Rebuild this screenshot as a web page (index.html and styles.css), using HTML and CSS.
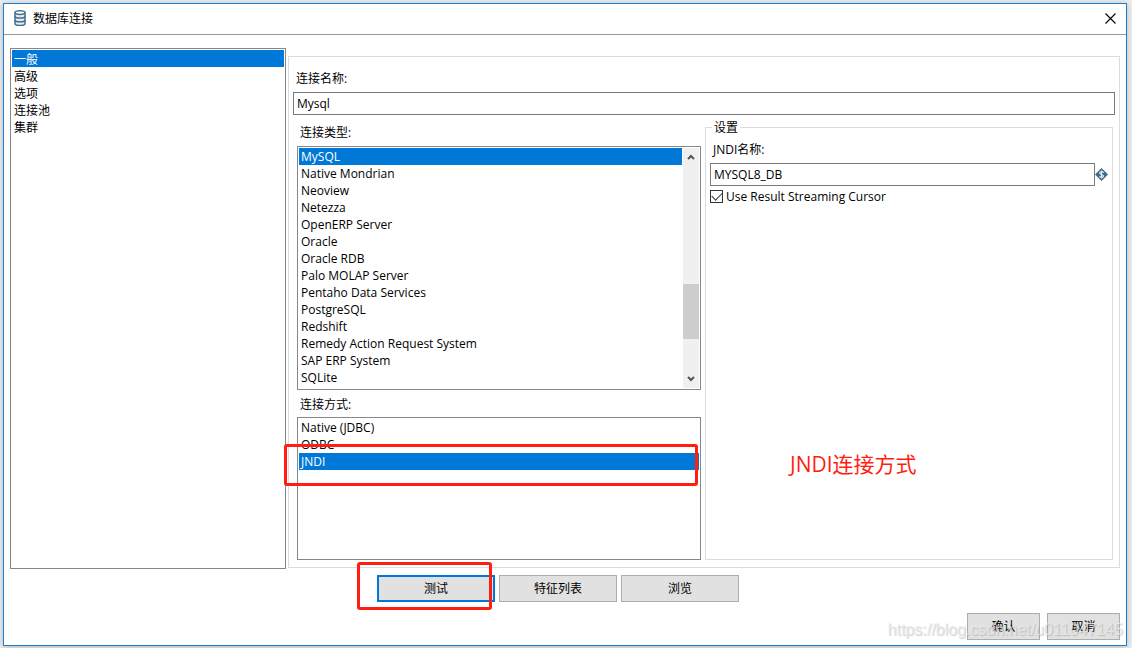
FILE: index.html
```html
<!DOCTYPE html>
<html lang="zh-CN">
<head>
<meta charset="utf-8">
<title>数据库连接</title>
<link rel="stylesheet" href="styles.css">
</head>
<body>
<main class="dialog">
  <header class="titlebar">
    <svg class="db-icon" viewBox="0 0 12 16" width="12" height="16" aria-hidden="true">
      <path d="M1 2.5v11c0 2.6 10 2.6 10 0v-11" fill="#e4ebf0" stroke="#45708c" stroke-width="1.5"/>
      <ellipse cx="6" cy="2.6" rx="5" ry="1.8" fill="#fff" stroke="#45708c" stroke-width="1.5"/>
      <path d="M1 6.2c0 2.4 10 2.4 10 0M1 9.9c0 2.4 10 2.4 10 0" fill="none" stroke="#45708c" stroke-width="1.6"/>
    </svg>
    <h1 class="title">数据库连接</h1>
    <button class="close" type="button" aria-label="关闭">
      <svg viewBox="0 0 11 11" width="11" height="11"><path d="M.5.5l10 10M10.5.5l-10 10" stroke="#000" stroke-width="1.1"/></svg>
    </button>
  </header>

  <div class="content">
    <select class="listbox sections" size="5" aria-label="分类">
      <option selected>一般</option>
      <option>高级</option>
      <option>选项</option>
      <option>连接池</option>
      <option>集群</option>
    </select>

    <section class="panel">
      <label class="label name-label" for="conn-name">连接名称:</label>
      <input class="textbox" id="conn-name" type="text" value="Mysql">
      <div class="columns">
        <div class="choices">
          <label class="label" for="conn-type">连接类型:</label>
          <div class="scroll-list">
            <select class="listbox types" id="conn-type" size="14">
              <option selected>MySQL</option>
              <option>Native Mondrian</option>
              <option>Neoview</option>
              <option>Netezza</option>
              <option>OpenERP Server</option>
              <option>Oracle</option>
              <option>Oracle RDB</option>
              <option>Palo MOLAP Server</option>
              <option>Pentaho Data Services</option>
              <option>PostgreSQL</option>
              <option>Redshift</option>
              <option>Remedy Action Request System</option>
              <option>SAP ERP System</option>
              <option>SQLite</option>
            </select>
            <div class="scrollbar" aria-hidden="true">
              <svg viewBox="0 0 8 6" width="8" height="6"><path d="M1 5l3-3 3 3" fill="none" stroke="#555" stroke-width="2"/></svg>
              <div class="track"><div class="thumb"></div></div>
              <svg viewBox="0 0 8 6" width="8" height="6"><path d="M1 1l3 3 3-3" fill="none" stroke="#555" stroke-width="2"/></svg>
            </div>
          </div>
          <label class="label method-label" for="conn-method">连接方式:</label>
          <div class="method">
            <select class="listbox methods" id="conn-method" size="3">
              <option>Native (JDBC)</option>
              <option>ODBC</option>
              <option selected>JNDI</option>
            </select>
            <div class="mark mark-method"></div>
          </div>
        </div>

        <fieldset class="settings">
          <legend class="legend">设置</legend>
          <label class="label jndi-label" for="jndi">JNDI名称:</label>
          <div class="jndi-row">
            <input class="textbox jndi" id="jndi" type="text" value="MYSQL8_DB">
            <svg class="var-icon" viewBox="0 0 13 13" width="13" height="13" aria-hidden="true">
              <path d="M6.500 0L13 6.500 6.500 13 0 6.500z" fill="#3d6d8a"/>
              <path d="M8.500 4.700C7.900 3.300 4.600 3.400 4.600 5s3.900 1.300 3.900 3-3.400 1.800-4 .3M6.500 2.500v8" fill="none" stroke="#e6eef3" stroke-width="1.200"/>
            </svg>
          </div>
          <label class="check"><input class="checkbox" type="checkbox" checked>Use Result Streaming Cursor</label>
          <p class="note">JNDI连接方式</p>
        </fieldset>
      </div>
    </section>
  </div>

  <div class="actions">
    <div class="test">
      <button class="button focused" type="button">测试</button>
      <div class="mark mark-test"></div>
    </div>
    <button class="button" type="button">特征列表</button>
    <button class="button" type="button">浏览</button>
  </div>

  <footer class="footer">
    <button class="button small" type="button">确认</button>
    <button class="button small" type="button">取消</button>
    <span class="watermark">https://blog.csdn.net/u011047145</span>
  </footer>
</main>
</body>
</html>
```
FILE: styles.css
```css
* { box-sizing: border-box; }
body {
  margin: 0;
  min-height: 100vh;
  display: flex;
  padding: 3px 5px 2px 3px;
  background: #ededed;
  color: #000;
  font: 12px/17px "Open Sans", "Noto Sans CJK SC", sans-serif;
}
button, input, select { font: inherit; color: inherit; }
.dialog {
  flex: 1;
  min-width: 0;
  display: flex;
  flex-direction: column;
  border: 1px solid #1a7fd0;
  background: #fff;
  box-shadow: 0 1px 6px rgba(0, 0, 0, 0.25);
}
.titlebar {
  display: flex;
  align-items: center;
  height: 31px;
  padding: 0 10px 2px;
  border-bottom: 1px solid #999;
}
.title { margin: 0 auto 0 7px; font-size: 12px; font-weight: 400; }
.close { display: flex; padding: 0; border: 0; background: none; }

.content {
  flex: 1;
  display: grid;
  grid-template-columns: 276px 1fr;
  gap: 2px;
  padding: 13px 6px 0;
}
.listbox {
  display: block;
  width: 100%;
  margin: 0;
  padding: 1px;
  border: 1px solid #828790;
  border-radius: 0;
  outline: 0;
  background: #fff;
  overflow: hidden;
}
.listbox option { height: 17px; min-height: 17px; padding: 0 2px; line-height: 17px; overflow: hidden; }
.listbox option:checked {
  background: linear-gradient(#0078d7, #0078d7);
  -webkit-text-fill-color: #fff;
}
.sections { height: 100%; }
.panel {
  display: flex;
  flex-direction: column;
  min-width: 0;
  margin: 8px 0 1px;
  padding: 13px 4px 7px;
  border: 1px solid #dcdcdc;
}
.label { display: block; padding-left: 3px; }
.name-label { margin-bottom: 5px; }
.textbox {
  width: 100%;
  height: 23px;
  padding: 0 3px;
  border: 1px solid #7a7a7a;
  border-radius: 0;
  outline: 0;
  background: #fff;
}
.columns {
  flex: 1;
  display: grid;
  grid-template-columns: 404px 1fr;
  gap: 4px;
  padding: 9px 2px 0 4px;
}
.choices { display: flex; flex-direction: column; }
.scroll-list { display: flex; height: 244px; margin-top: 5px; border: 1px solid #828790; }
.types { flex: 1; height: 100%; border: 0; }
.scrollbar {
  display: flex;
  flex-direction: column;
  align-items: center;
  width: 16px;
  margin: 1px 1px 1px 0;
  padding: 6px 0;
  background: #f0f0f0;
}
.track { flex: 1; width: 100%; display: flex; flex-direction: column; }
.thumb { height: 55px; margin-top: 124px; background: #cdcdcd; }
.method-label { margin: 6px 0 4px; }
.method { position: relative; flex: 1; }
.methods { height: 100%; }
.mark { position: absolute; border: 3px solid #ff1e10; border-radius: 3px; pointer-events: none; }
.mark-method { left: -13px; right: 3px; top: 27px; height: 42px; }

.settings { position: relative; min-width: 0; margin: -5px 0 0; padding: 5px 4px 0; border: 1px solid #dcdcdc; }
.legend { margin-left: 2px; padding: 0 2px; line-height: 17px; }
.jndi-label { margin-bottom: 5px; }
.jndi-row { display: flex; align-items: center; }
.jndi { flex: 1; min-width: 0; }
.check { display: flex; align-items: center; gap: 3px; margin-top: 2px; }
.checkbox {
  appearance: none;
  width: 13px;
  height: 13px;
  margin: 0;
  border: 1px solid #333;
  background: #fff;
  display: grid;
  place-items: center;
}
.checkbox:checked::after {
  content: "";
  width: 9px;
  height: 5px;
  margin-bottom: 3px;
  border: solid #333;
  border-width: 0 0 1px 1px;
  transform: rotate(-45deg);
}
.note {
  position: absolute;
  left: 84px;
  top: 313px;
  margin: 0;
  color: #ff1e10;
  font-size: 21px;
  line-height: 30px;
}

.actions { display: flex; justify-content: center; gap: 4px; padding: 6px 14px 0 0; }
.test { position: relative; }
.button {
  width: 118px;
  height: 27px;
  padding: 0;
  border: 1px solid #adadad;
  border-radius: 0;
  background: #e1e1e1;
}
.focused { display: block; border: 2px solid #0078d7; }
.mark-test { left: -20px; top: -13px; width: 135px; height: 48px; }
.small { width: 73px; }
.footer {
  position: relative;
  display: flex;
  justify-content: flex-end;
  gap: 7px;
  padding: 11px 6px 5px;
}
.watermark {
  position: absolute;
  right: 3px;
  bottom: 5px;
  color: rgba(235, 235, 235, 0.75);
  font: 16px/20px "Liberation Sans", sans-serif;
  text-shadow: 1px 1px 1px rgba(120, 120, 120, 0.35);
  pointer-events: none;
}
```
